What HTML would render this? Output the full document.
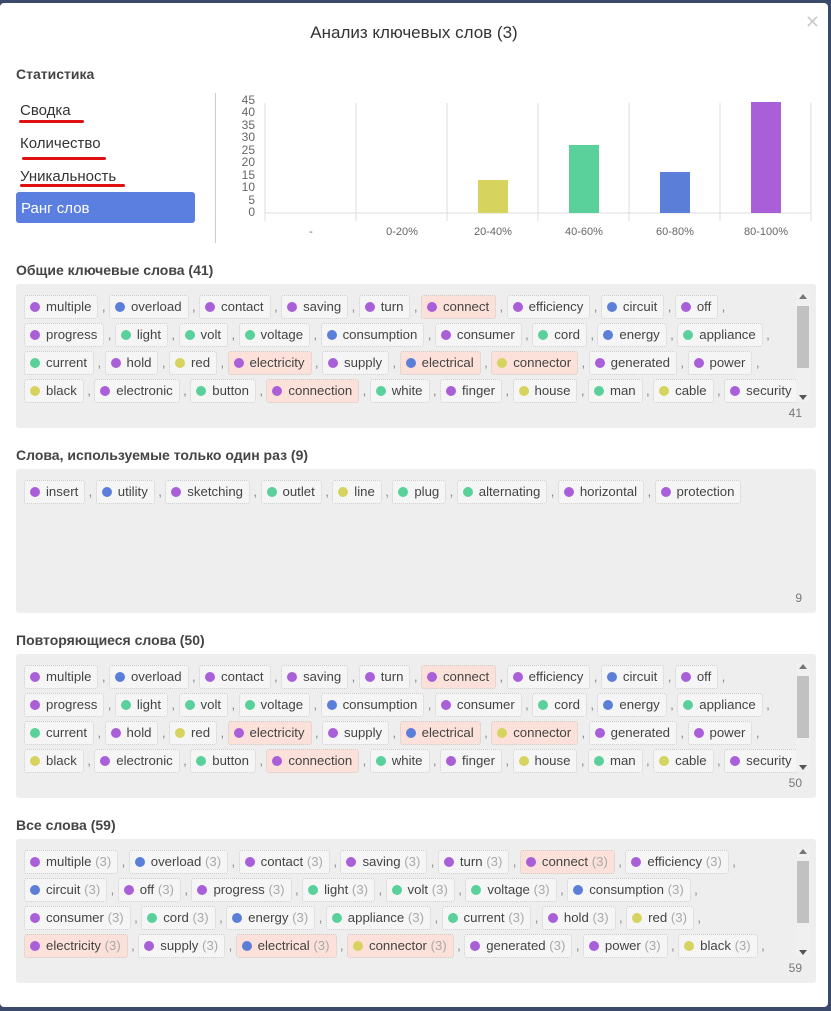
<!DOCTYPE html>
<html><head><meta charset="utf-8"><style>
*{box-sizing:border-box}
body{margin:0;width:831px;height:1011px;background:#3b4a6b;font-family:"Liberation Sans","DejaVu Sans",sans-serif;overflow:hidden;position:relative}
.modal{position:absolute;left:0;top:3px;width:828px;height:1004px;background:#fff;border-radius:4px}
.title{position:absolute;top:20px;left:0;right:0;text-align:center;font-size:17px;color:#333}
.close{position:absolute;right:8px;top:9px;color:#ccc;font-size:18px}
h4{position:absolute;left:16px;margin:0;font-size:14px;color:#444;font-weight:bold}
.menu{position:absolute;left:20px;font-size:15px;color:#333}
.ul{position:absolute;height:3px;background:#e01010;border-radius:2px}
.box{position:absolute;left:16px;width:800px;height:144px;background:#eee;border-radius:3px;overflow:hidden}
.row{position:absolute;left:8px;white-space:nowrap;height:24px;font-size:13.2px;color:#444}
.tag{display:inline-block;height:24px;line-height:22px;border:1px dotted #ccc;background:#f5f5f5;border-radius:3px;padding:0 6px 0 5px;vertical-align:top}
.tag.h{background:#fbe1d9}
.dot{display:inline-block;width:10px;height:10px;border-radius:50%;margin-right:6px;vertical-align:-1px}
.cm{display:inline-block;width:10.5px;text-align:center;color:#888;line-height:24px;vertical-align:top}
.n{color:#aaa}
.cnt{position:absolute;right:14px;bottom:8px;font-size:12px;color:#777}
.sb{position:absolute;right:6px;top:8px;width:14px;height:110px;background:#f0f0f0}
.sb i{position:absolute;left:1px;right:1px;top:14px;height:62px;background:#c1c1c1}
.sb b{position:absolute;left:3px;width:0;height:0;border-left:4px solid transparent;border-right:4px solid transparent}
</style></head><body>
<div class="modal">
<div class="title">Анализ ключевых слов (3)</div>
<div class="close">✕</div>
<h4 style="top:63px">Статистика</h4>
<div class="menu" style="top:99px">Сводка</div><div class="ul" style="left:19px;top:117px;width:65px"></div>
<div class="menu" style="top:132px">Количество</div><div class="ul" style="left:22px;top:154px;width:84px"></div>
<div class="menu" style="top:165px">Уникальность</div><div class="ul" style="left:20px;top:181px;width:105px"></div>
<div style="position:absolute;left:16px;top:189px;width:179px;height:31px;background:#5b7fe0;border-radius:3px;color:#fff;font-size:15px;line-height:33px;padding-left:5px">Ранг слов</div>
<div style="position:absolute;left:215px;top:90px;width:1px;height:150px;background:#ccc"></div>
<svg style="position:absolute;left:220px;top:90px" width="600" height="150">
<g font-size="12" fill="#666" text-anchor="end" font-family="Liberation Sans">
<text x="35" y="11">45</text><text x="35" y="23">40</text><text x="35" y="36">35</text><text x="35" y="48">30</text><text x="35" y="61">25</text><text x="35" y="73">20</text><text x="35" y="86">15</text><text x="35" y="98">10</text><text x="35" y="111">5</text><text x="35" y="123">0</text></g>
<g stroke="#ddd"><line x1="45" y1="10" x2="45" y2="128"/><line x1="136" y1="10" x2="136" y2="128"/><line x1="227" y1="10" x2="227" y2="128"/><line x1="318" y1="10" x2="318" y2="128"/><line x1="409" y1="10" x2="409" y2="128"/><line x1="500" y1="10" x2="500" y2="128"/><line x1="591" y1="10" x2="591" y2="128"/><line x1="45" y1="120" x2="591" y2="120"/></g>
<rect x="258" y="87" width="30" height="33" fill="#d6d35f"/>
<rect x="349" y="52" width="30" height="68" fill="#5ad19a"/>
<rect x="440" y="79" width="30" height="41" fill="#5b7fd8"/>
<rect x="531" y="9" width="30" height="111" fill="#a95fd8"/>
<g font-size="11" fill="#666" text-anchor="middle" font-family="Liberation Sans">
<text x="91" y="142">-</text><text x="182" y="142">0-20%</text><text x="273" y="142">20-40%</text><text x="364" y="142">40-60%</text><text x="455" y="142">60-80%</text><text x="546" y="142">80-100%</text></g>
</svg>
<h4 style="top:259px">Общие ключевые слова (41)</h4>
<div class="box" id="b1" style="top:281px"></div>
<h4 style="top:444px">Слова, используемые только один раз (9)</h4>
<div class="box" id="b2" style="top:466px"></div>
<h4 style="top:629px">Повторяющиеся слова (50)</h4>
<div class="box" id="b3" style="top:651px"></div>
<h4 style="top:814px">Все слова (59)</h4>
<div class="box" id="b4" style="top:836px"></div>
</div>
<script>
var C={p:"#a95fd8",b:"#5b7fd8",g:"#5ad19a",y:"#d6d35f"};
var R=[
"multiple p,overload b,contact p,saving p,turn p,connect pH,efficiency p,circuit b,off p",
"progress p,light g,volt g,voltage g,consumption b,consumer p,cord g,energy b,appliance g",
"current g,hold p,red y,electricity pH,supply p,electrical bH,connector yH,generated p,power p",
"black y,electronic p,button g,connection pH,white g,finger p,house y,man g,cable y,security p"];
var R4=[
"multiple p,overload b,contact p,saving p,turn p,connect pH,efficiency p",
"circuit b,off p,progress p,light g,volt g,voltage g,consumption b",
"consumer p,cord g,energy b,appliance g,current g,hold p,red y",
"electricity pH,supply p,electrical bH,connector yH,generated p,power p,black y"];
function build(id,rows,n,cnt,sb,last){
 var el=document.getElementById(id),h="";
 rows.forEach(function(r,i){
  var items=r.split(","),s="";
  items.forEach(function(it,j){
   var a=it.split(" "),w=a[0],c=a[1];
   s+='<span class="tag'+(c.indexOf("H")>0?" h":"")+'"><span class="dot" style="background:'+C[c[0]]+'"></span>'+w+(n?' <span class="n">(3)</span>':'')+'</span>';
   if(!(last&&i==rows.length-1&&j==items.length-1))s+='<span class="cm">,</span>';
  });
  h+='<div class="row" style="top:'+(11+28*i)+'px">'+s+'</div>';
 });
 if(sb)h+='<div class="sb"><b style="top:2px;border-bottom:5px solid #777"></b><i></i><b style="bottom:2px;border-top:5px solid #555"></b></div>';
 h+='<div class="cnt">'+cnt+'</div>';
 el.innerHTML=h;
}
build("b1",R,0,41,1,1);
build("b2",["insert p,utility b,sketching p,outlet g,line y,plug g,alternating g,horizontal p,protection p"],0,9,0,1);
build("b3",R,0,50,1,1);
build("b4",R4,1,59,1,0);
</script>
</body></html>
